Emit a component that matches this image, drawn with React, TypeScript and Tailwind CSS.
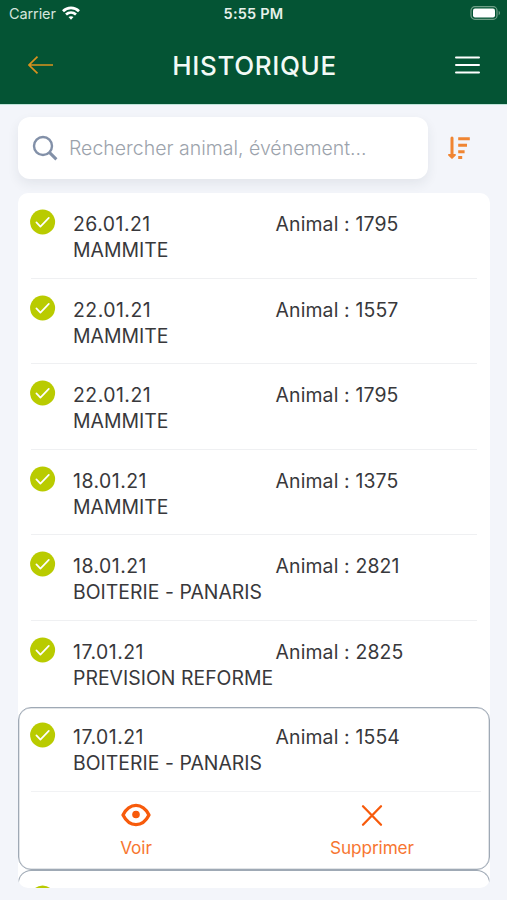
import React from "react";

type Entry = { date: string; event: string; animal: string };

const entries: Entry[] = [
  { date: "26.01.21", event: "MAMMITE", animal: "1795" },
  { date: "22.01.21", event: "MAMMITE", animal: "1557" },
  { date: "22.01.21", event: "MAMMITE", animal: "1795" },
  { date: "18.01.21", event: "MAMMITE", animal: "1375" },
  { date: "18.01.21", event: "BOITERIE - PANARIS", animal: "2821" },
  { date: "17.01.21", event: "PREVISION REFORME", animal: "2825" },
];

function CheckBadge() {
  return (
    <svg className="block h-[26px] w-[26px] shrink-0" viewBox="0 0 26 26" fill="none">
      <circle cx="12.6" cy="13" r="12.5" fill="#b9cb00" />
      <path d="M6.4 13.4l4 4.2 8.4-8.8" stroke="#fff" strokeWidth="1.7" strokeLinecap="round" strokeLinejoin="round" />
    </svg>
  );
}

function EntryRow({ entry }: { entry: Entry }) {
  return (
    <div className="flex pl-[11.5px] pt-4">
      <CheckBadge />
      <div className="grid grow grid-cols-[202.5px_1fr] pl-[17.5px] pt-0.5 text-[19.4px] leading-[26px] text-[#38383b]">
        <span className="tracking-[0.5px]">{entry.date}</span>
        <span className="tracking-[0.15px]">Animal : {entry.animal}</span>
        <span className="col-span-2 whitespace-nowrap tracking-[0.03px]">{entry.event}</span>
      </div>
    </div>
  );
}

function Header() {
  return (
    <header className="h-[105px] border-b border-[#bfe3d8] bg-[#045434] text-white">
      <div className="grid h-7 grid-cols-3 items-center pl-[9px] pr-[6px] text-[14.5px]">
        <div className="flex items-center gap-[6px]">
          <span className="tracking-[-0.1px] text-[#d5e5dc]">Carrier</span>
          <svg className="-mt-0.5 h-[14px] w-[18px]" viewBox="0 0 18 14" fill="none" stroke="#fff" strokeWidth="2.7">
            <path d="M1 5.2C5.5.8 12.5.8 17 5.2" />
            <path d="M4 8.6c2.9-2.7 7.1-2.7 10 0" />
            <path d="M9 13.8l-2.5-2.7c1.5-1.2 3.5-1.2 5 0z" fill="#fff" stroke="none" />
          </svg>
        </div>
        <span className="-ml-[3px] text-center font-semibold tracking-[0.2px] text-[#e6f0ea]">5:55 PM</span>
        <svg className="-mt-0.5 h-[14px] w-[31px] justify-self-end" viewBox="0 0 31 14" fill="none">
          <rect x="1" y="0.7" width="26" height="12.6" rx="3.8" stroke="#6f9f87" strokeWidth="1.2" />
          <rect x="3" y="2.5" width="22" height="9" rx="2" fill="#fff" />
          <path d="M28.7 4.8c1.8.7 1.8 3.7 0 4.4z" fill="#6f9f87" />
        </svg>
      </div>
      <div className="flex h-[75px] items-center justify-between pl-7 pr-[27px]">
        <svg className="-mt-px h-[18px] w-[26px]" viewBox="0 0 26 18" fill="none" stroke="#d9921e" strokeWidth="1.7">
          <path d="M25 9H1M9.5 0.7L1 9l8.5 8.3" />
        </svg>
        <h1 className="text-[26px] font-medium tracking-[0.62px] text-[#f3faf6]">HISTORIQUE</h1>
        <svg className="-mt-px h-[18px] w-[25px]" viewBox="0 0 25 18" stroke="#fff" strokeWidth="2" strokeLinecap="round">
          <path d="M1 1.5h23M1 9h23M1 16.5h23" />
        </svg>
      </div>
    </header>
  );
}

export default function App() {
  return (
    <div className="flex h-[900px] w-[507px] flex-col overflow-hidden bg-[#f3f5fa] font-['Inter','Liberation_Sans',sans-serif]">
      <Header />
      <div className="flex items-center px-[18px] pt-3">
        <div className="flex h-[62px] w-[410px] items-center rounded-xl bg-white pl-[14px] shadow-[0_5px_12px_rgba(40,45,60,0.08)]">
          <svg className="h-[26px] w-[26px]" viewBox="0 0 26 26" fill="none" stroke="#8290a8" strokeWidth="2.4">
            <circle cx="11" cy="11" r="9" />
            <path d="M17.6 17.6L24.4 24.4" strokeWidth="3" />
          </svg>
          <span className="pl-[11px] pt-0.5 text-[19.5px] font-light text-[#9ca3ac]">Rechercher animal, événement...</span>
        </div>
        <svg className="ml-5 h-6 w-[22px]" viewBox="0 0 22 24" fill="none" stroke="#f08532" strokeWidth="3" strokeLinecap="round">
          <path d="M4 2v17" strokeLinecap="round" />
          <path d="M0.9 18.9h6.2L4 22z" fill="#f08532" strokeWidth="1.7" strokeLinejoin="round" />
          <g strokeLinecap="butt">
            <path d="M10.2 2.8h11.6M10.2 9.3h8.8M10.2 15.7h6.4M10.2 21.6h4" />
          </g>
        </svg>
      </div>
      <main className="ml-[18px] mr-[17px] mt-[14px] h-[695px] overflow-hidden rounded-[10px] bg-white">
        <div className="h-[514px]">
          {entries.map((entry, i) => (
            <section key={i} className="flex h-[85.6px] flex-col justify-between">
              <EntryRow entry={entry} />
              {i < 5 && <div className="ml-[13px] mr-[13px] h-px shrink-0 bg-[#eff0f2]" />}
            </section>
          ))}
        </div>
        <section className="h-[163px] rounded-[13px] border border-[#9fa9b5] shadow-[inset_0_0_0_0.5px_#c3c9d0]">
          <div className="-ml-px -mt-0.5 h-[85px]">
            <EntryRow entry={{ date: "17.01.21", event: "BOITERIE - PANARIS", animal: "1554" }} />
          </div>
          <div className="ml-3 mr-2 grid h-[75px] grid-cols-2 border-t border-[#f1f2f4] pt-[11px] text-[17.2px] leading-6 tracking-[-0.1px] text-[#f77630]">
            <div className="flex flex-col items-center pr-[15px]">
              <svg className="h-6 w-[30px]" viewBox="0 0 30 24" fill="none">
                <path d="M2 12C8.5-.8 21.5-.8 28 12 21.5 24.8 8.5 24.8 2 12z" stroke="#f75b0c" strokeWidth="3.3" strokeLinejoin="round" />
                <circle cx="15" cy="11.5" r="3.8" fill="#f75b0c" />
              </svg>
              <span className="mt-[9px]">Voir</span>
            </div>
            <div className="flex flex-col items-center pl-[7px]">
              <svg className="h-6 w-6" viewBox="0 0 24 24" stroke="#f75b0c" strokeWidth="2.3" strokeLinecap="round">
                <path d="M3 3.3L21 21.7M21 3.3L3 21.7" />
              </svg>
              <span className="mt-[9px]">Supprimer</span>
            </div>
          </div>
        </section>
        <section className="h-[30px] rounded-t-[13px] border border-b-0 border-[#9fa9b5] pl-[10.5px] pt-[14px]">
          <CheckBadge />
        </section>
      </main>
    </div>
  );
}
